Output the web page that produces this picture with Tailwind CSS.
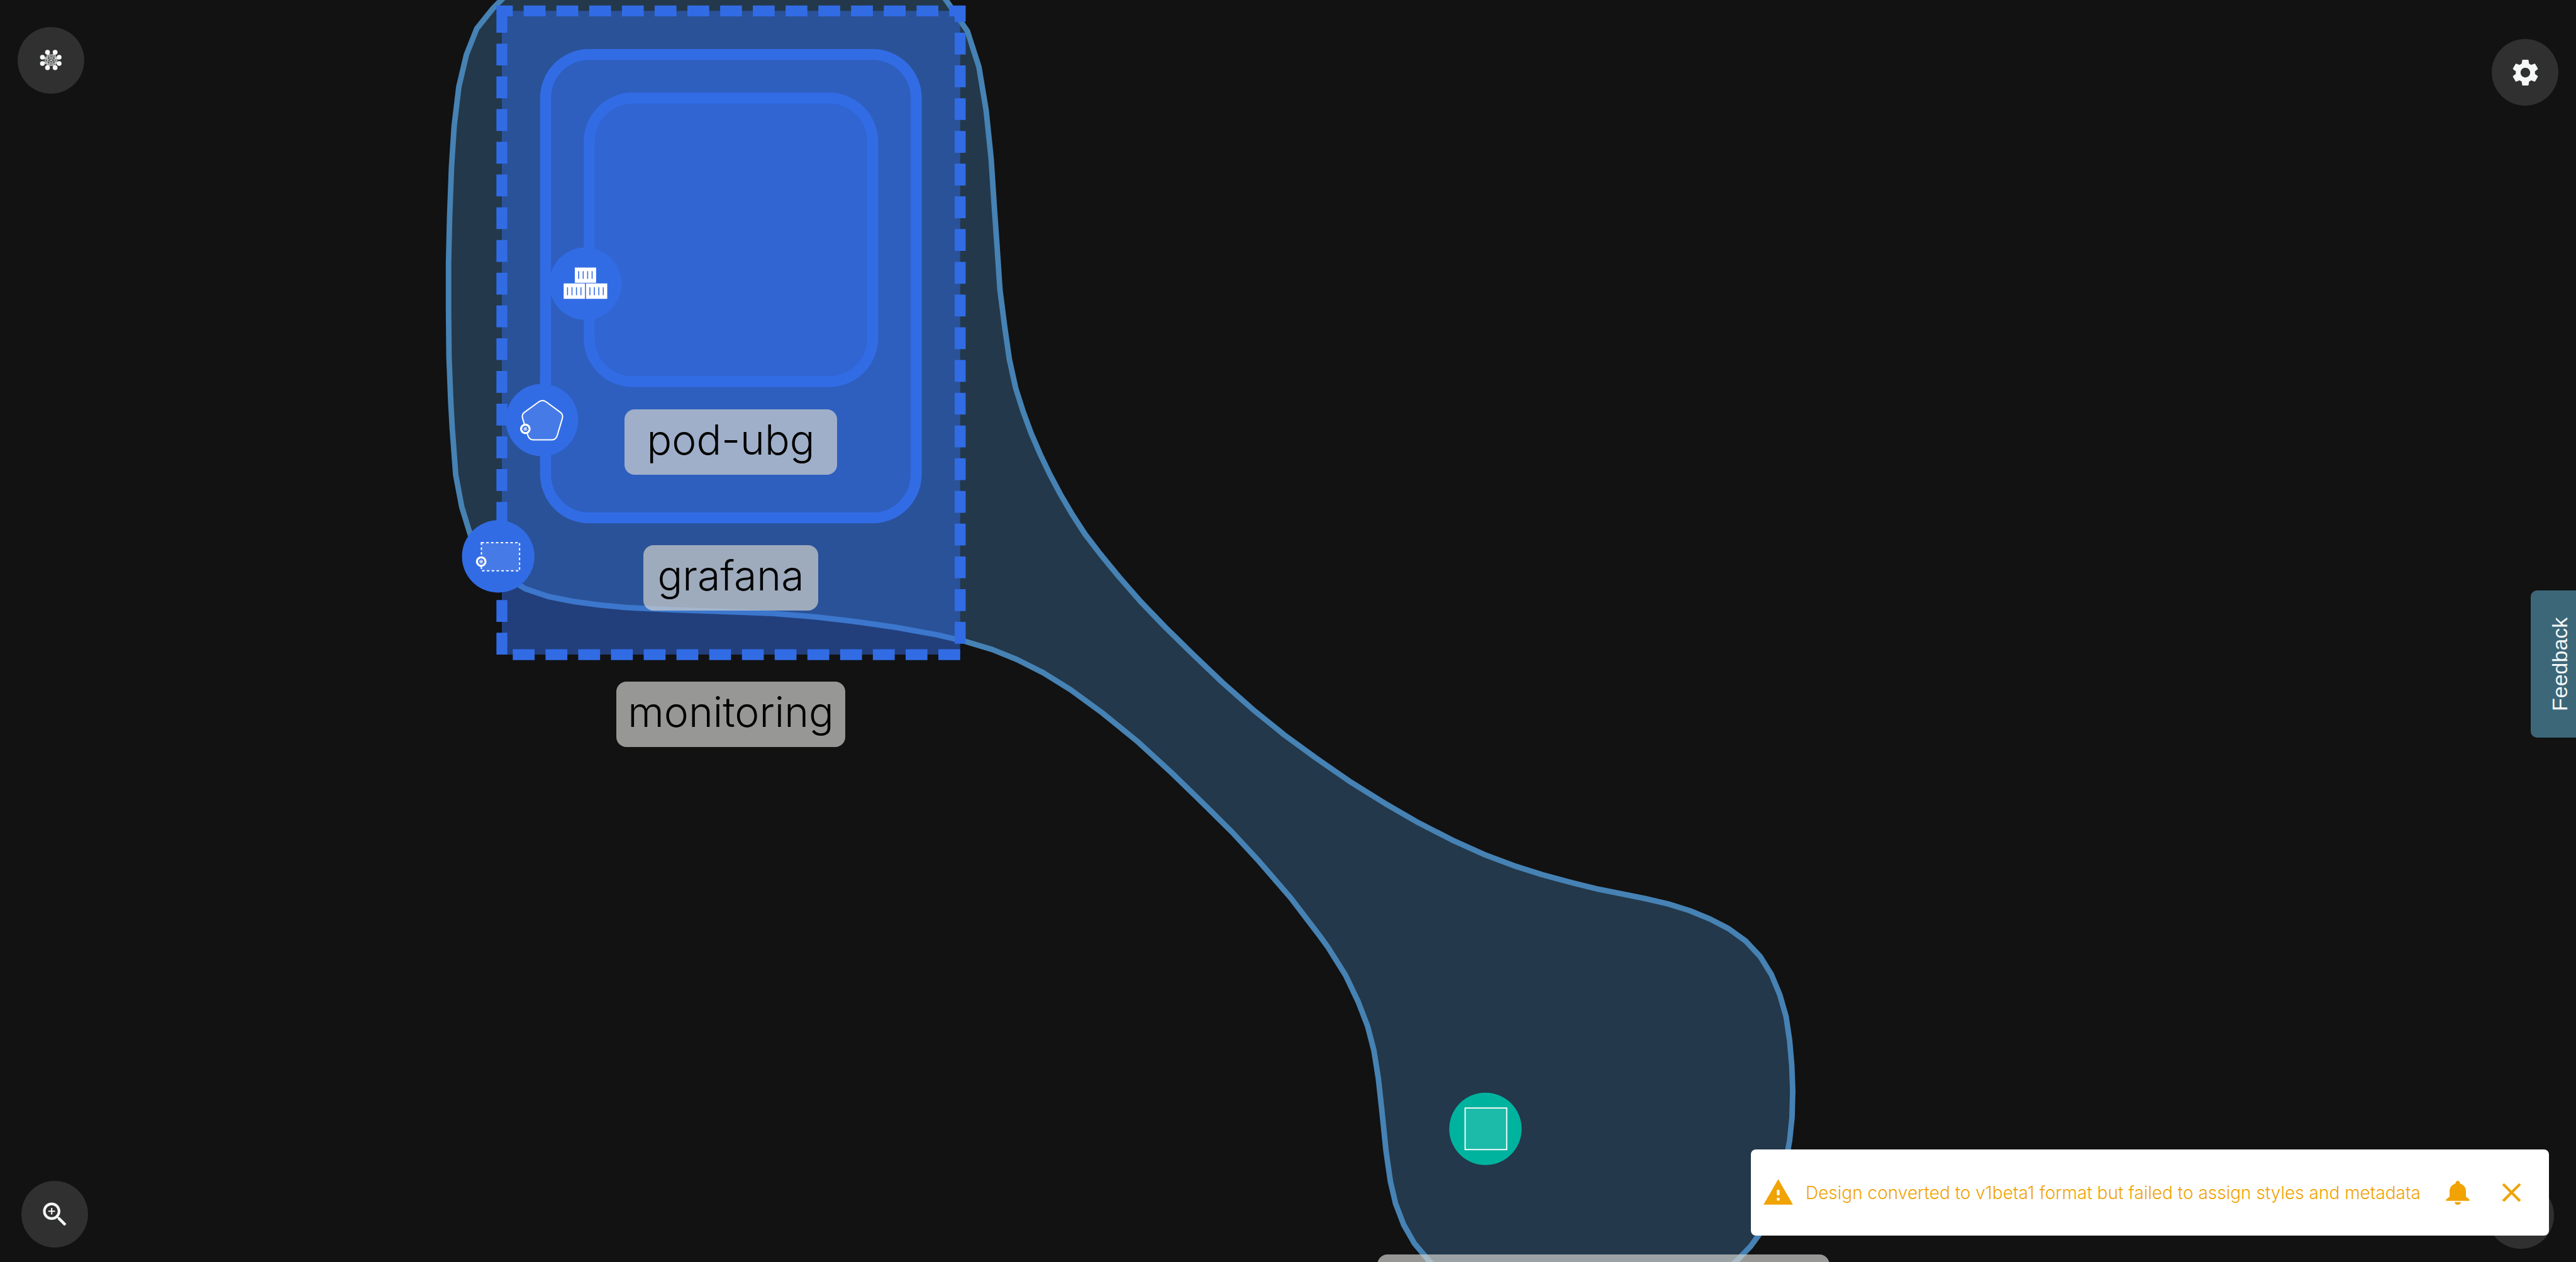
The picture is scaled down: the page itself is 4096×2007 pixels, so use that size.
<!DOCTYPE html>
<html lang="en">
<head>
<meta charset="utf-8">
<title>Design visualizer</title>
<script src="https://cdn.jsdelivr.net/npm/@tailwindcss/browser@4"></script>
</head>
<body class="bg-[#121212]">
<main class="relative h-screen w-full overflow-hidden font-['Inter',sans-serif]">

  <!-- Design canvas -->
  <svg class="absolute inset-0 size-full" role="img" aria-label="Design canvas">
    <defs>
      <g id="helm">
        <circle r="11.8" fill="#fff"/>
        <path d="M0-7.6 6-4.8 7.4 1.7 3.3 6.9H-3.3L-7.4 1.7-6-4.8Z" fill="#326ce5"/>
        <g fill="none" stroke="#fff" stroke-width=".9">
          <circle r="3.4"/>
          <path d="M0 0V-5.4M0 0 4.2-3.4M0 0 5.3 1.2M0 0 2.3 4.9M0 0-2.3 4.9M0 0-5.3 1.2M0 0-4.2-3.4"/>
        </g>
        <circle r="1.2" fill="#fff"/>
      </g>
    </defs>
    <g transform="scale(.71111)">
      <!-- Group bubble -->
      <path fill="#4682b4" fill-opacity=".35" stroke="#4682b4" stroke-width="12.4" stroke-linejoin="round" d="M1121 0 1103 18 1066 64 1043 122 1026 194 1015.6 281 1009.6 373 1005.3 488 1003 588 1003 694 1004 798 1008 900 1011.3 959 1019 1062 1032.6 1134 1051 1194 1080 1245 1123 1286 1174.5 1316.6 1225.8 1334 1280.5 1345 1340 1353 1400 1358.6 1507 1364 1627 1368 1729 1372 1827 1380 1908.6 1389.5 2002.6 1403 2096.6 1420 2156 1433.8 2219 1452.7 2274 1475 2333 1504.6 2394.6 1543 2464.8 1594.4 2542 1657 2620.5 1729 2693.5 1800 2755 1861 2815 1926 2886 2008 2950 2091.8 2969 2117.8 3009 2181.6 3037 2240.5 3058 2295 3072 2349 3081.9 2411 3088.9 2474 3099.4 2575.8 3109 2642.5 3120.5 2691.6 3138.7 2739 3162.6 2780.7 3195.5 2820 3260 2880H3820L3883 2820 3914.6 2787 3940 2752 3966 2700 3986 2636 4001.6 2551 4007 2498.7 4008.6 2439 4006.5 2383 4001.6 2326.8 3993.8 2274 3979.8 2225 3960.9 2179.5 3935.6 2138.8 3904 2105 3865.5 2077 3824 2055.3 3777.8 2036.4 3730 2021.6 3676 2009 3630.5 1999.9 3574.3 1988.7 3514.7 1974 3449.5 1956.4 3385 1936 3318.3 1910.8 3248 1879 3171.7 1840 3097.3 1797 3021 1749.5 2941.8 1694.7 2871.7 1643.5 2801.5 1586.7 2732.8 1525.7 2668.2 1464 2606.5 1403.6 2551 1346 2502.7 1290.7 2460.6 1239.5 2426.2 1194.6 2396.7 1149 2370.8 1104.8 2347 1059.9 2325.9 1015.7 2305.5 968.7 2288 921 2271.2 868.4 2257 803.8 2246.6 731.6 2236 648.6 2229 545 2223 459 2216.3 356 2205 246.8 2189 150 2163.3 70 2115.4 0 2080-40H1160Z"/>

      <!-- Namespace: monitoring -->
      <path d="M1122.2 24.4V1464H2147V24.4Z" fill="#326ce5" fill-opacity=".5"/>
      <path d="M1122.2 24.4V1464H2147V24.4Z" fill="none" stroke="#326ce5" stroke-width="24.4" stroke-dasharray="48.8 24.4"/>
      <!-- Deployment: grafana -->
      <rect x="1219.8" y="121.8" width="829" height="1036.4" rx="97.6" fill="#326ce5" fill-opacity=".5"/>
      <rect x="1219.8" y="121.8" width="829" height="1036.4" rx="97.6" fill="none" stroke="#326ce5" stroke-width="24.4"/>
      <!-- Pod: pod-ubg -->
      <rect x="1317.4" y="219.4" width="634" height="634" rx="97.6" fill="#326ce5" fill-opacity=".5"/>
      <rect x="1317.4" y="219.4" width="634" height="634" rx="97.6" fill="none" stroke="#326ce5" stroke-width="24.4"/>

      <!-- Container badge -->
      <circle cx="1309" cy="634.5" r="81" fill="#326ce5"/>
      <path fill="#fff" d="M1285.3 598.4h47.6v34h-47.6zM1260.4 634h47.6v34.4h-47.6zM1310.2 634h47.6v34.4h-47.6z"/>
      <path stroke="#326ce5" stroke-width="2.2" d="M1294 606.4v17.4M1304 606.4v17.4M1314 606.4v17.4M1324 606.4v17.4M1269 642.4v18M1279 642.4v18M1289 642.4v18M1299 642.4v18M1319 642.4v18M1329 642.4v18M1339 642.4v18M1349 642.4v18"/>

      <!-- Deployment badge -->
      <circle cx="1211.8" cy="939.4" r="81" fill="#326ce5"/>
      <path transform="translate(1130 860) scale(.33333)" fill="#fff" fill-opacity=".1" stroke="#fff" stroke-width="8.4" d="M272 115 370 187Q388 201 383 225L347 345Q337 371 310 371H190Q162 371 152 345L115 225Q109 201 127 187L226 115Q249 100 272 115Z"/>
      <use href="#helm" x="1174.7" y="959.2"/>

      <!-- Namespace badge -->
      <circle cx="1114" cy="1244.4" r="81" fill="#326ce5"/>
      <rect x="1076.4" y="1213.6" width="85.4" height="63" fill="#fff" fill-opacity=".1" stroke="#fff" stroke-width="2.8" stroke-dasharray="5.6 5.2"/>
      <use href="#helm" x="1076" y="1256"/>

      <!-- Component node -->
      <circle cx="3321.5" cy="2524.6" r="81" fill="#00b39f"/>
      <rect x="3276" y="2478" width="93" height="93" fill="#fff" fill-opacity=".11" stroke="#fff" stroke-width="2.6"/>
    </g>
  </svg>

  <!-- Node labels -->
  <div class="absolute left-[993px] top-[651px] flex h-[104px] w-[338px] items-center justify-center rounded-2xl bg-[#d0d2cd]/70 pb-2 text-[66px] font-light text-black">pod-ubg</div>
  <div class="absolute left-[1023px] top-[867px] flex h-[104px] w-[278px] items-center justify-center rounded-2xl bg-[#d0d2cd]/70 pb-2 text-[66px] font-light text-black">grafana</div>
  <div class="absolute left-[980px] top-[1084px] flex h-[104px] w-[364px] items-center justify-center rounded-2xl bg-[#d0d2cd]/70 pb-2 text-[66px] font-light text-black">monitoring</div>
  <div class="absolute left-[2190px] top-[1995px] h-[104px] w-[719px] rounded-2xl bg-[#d0d2cd]/70"></div>

  <!-- Floating controls -->
  <button type="button" aria-label="Open menu" class="absolute left-[28px] top-[43px] flex size-[106px] items-center justify-center rounded-full bg-[#303030] text-[#f5f8f7]">
    <svg class="size-[48px]" viewBox="-101 -101 202 202" fill="none" stroke="currentColor">
      <path stroke-width="3" stroke-opacity=".85" d="M-20-40H24L42-16V18L24 36H-20L-42 18V-16ZM-23-50V46M28-50V46M-20-40 42-16 24 36-42 18-20-40 42 18-20 36-42-16 24-40 42 18M24-40-42 18M-20-40 24 36M24-40-20 36M-42-16 42 18M-42 18 42-16M-42-16 24 36M42-16-20 36M-42-16H42M-42 18H42"/>
      <g fill="currentColor" stroke="none">
        <circle cx="-23" cy="-54" r="16"/><circle cx="28" cy="-54" r="16"/><circle cx="55" cy="-21" r="16"/><circle cx="55" cy="21" r="16"/>
        <circle cx="28" cy="49" r="16"/><circle cx="-23" cy="49" r="16"/><circle cx="-57" cy="21" r="16"/><circle cx="-57" cy="-21" r="16"/>
      </g>
    </svg>
  </button>
  <button type="button" aria-label="Settings" class="absolute right-[28px] top-[62px] flex size-[106px] items-center justify-center rounded-full bg-[#303030] text-[#f5f8f7]">
    <svg class="size-[51px]" viewBox="0 0 24 24" fill="currentColor"><path d="M19.14 12.94c.04-.3.06-.61.06-.94 0-.32-.02-.64-.07-.94l2.03-1.58c.18-.14.23-.41.12-.61l-1.92-3.32c-.12-.22-.37-.29-.59-.22l-2.39.96c-.5-.38-1.03-.7-1.62-.94l-.36-2.54c-.04-.24-.24-.41-.48-.41h-3.84c-.24 0-.43.17-.47.41l-.36 2.54c-.59.24-1.13.57-1.62.94l-2.39-.96c-.22-.08-.47 0-.59.22L2.74 8.87c-.12.21-.08.47.12.61l2.03 1.58c-.05.3-.09.63-.09.94s.02.64.07.94l-2.03 1.58c-.18.14-.23.41-.12.61l1.92 3.32c.12.22.37.29.59.22l2.39-.96c.5.38 1.03.7 1.62.94l.36 2.54c.05.24.24.41.48.41h3.84c.24 0 .44-.17.47-.41l.36-2.54c.59-.24 1.13-.56 1.62-.94l2.39.96c.22.08.47 0 .59-.22l1.92-3.32c.12-.22.07-.47-.12-.61l-2.01-1.58zM12 15.6c-1.98 0-3.6-1.62-3.6-3.6s1.62-3.6 3.6-3.6 3.6 1.62 3.6 3.6-1.62 3.6-3.6 3.6z"/></svg>
  </button>
  <button type="button" aria-label="Zoom in" class="absolute bottom-[23px] left-[34px] flex size-[106px] items-center justify-center rounded-full bg-[#303030] text-[#f5f8f7]">
    <svg class="size-[51px]" viewBox="0 0 24 24" fill="currentColor"><path d="M15.5 14h-.79l-.28-.27C15.41 12.59 16 11.11 16 9.5 16 5.91 13.09 3 9.5 3S3 5.91 3 9.5 5.91 16 9.5 16c1.61 0 3.09-.59 4.23-1.57l.27.28v.79l5 4.99L20.49 19l-4.99-5zm-6 0C7.01 14 5 11.99 5 9.5S7.01 5 9.5 5 14 7.01 14 9.5 11.99 14 9.5 14zm2.5-4h-2v2H9v-2H7V9h2V7h1v2h2v1z"/></svg>
  </button>
  <button type="button" aria-label="Help" class="absolute bottom-[21px] right-[35px] size-[106px] rounded-full bg-[#303030]"></button>

  <!-- Feedback tab -->
  <button type="button" class="absolute right-0 top-[939px] flex h-[234px] w-[72px] rotate-180 items-center justify-center rounded-r-[10px] bg-[#3c6779] pr-[20px] font-['Liberation_Sans',Arial,sans-serif] text-[34px] text-[#f5f8f7] [writing-mode:vertical-rl]">Feedback</button>

  <!-- Notification -->
  <div role="alert" class="absolute bottom-[42px] right-[43px] flex h-[137px] items-center rounded-lg bg-white pl-[18px] pr-[34px] text-[#f0a303]">
    <svg class="size-[51px]" viewBox="0 0 24 24" fill="currentColor"><path d="M1 21h22L12 2 1 21zm12-3h-2v-2h2v2zm0-4h-2v-4h2v4z"/></svg>
    <p class="w-[1001px] whitespace-nowrap pl-[18px] text-[28px] font-light">Design converted to v1beta1 format but failed to assign styles and metadata</p>
    <button type="button" aria-label="Notifications" class="ml-[28px] flex size-[52px] items-center justify-center">
      <svg class="size-[38px]" viewBox="0 0 54 54" fill="currentColor"><path d="M27 0c3 0 5 2 5 4.500v1.500c8 2 13.500 9 13.500 17v13l8 6v3h-53v-3l8-6v-13c0-8 5.500-15 13.500-17v-1.500c0-2.500 2-4.500 5-4.500zM20 48h14c0 3.500-3 6-7 6s-7-2.500-7-6z"/></svg>
    </button>
    <button type="button" aria-label="Close" class="ml-[34px] flex size-[51px] items-center justify-center">
      <svg class="size-[51px]" viewBox="0 0 24 24" fill="currentColor"><path d="M19 6.410 17.590 5 12 10.590 6.410 5 5 6.410 10.590 12 5 17.590 6.410 19 12 13.410 17.590 19 19 17.590 13.410 12z"/></svg>
    </button>
  </div>
</main>
</body>
</html>
